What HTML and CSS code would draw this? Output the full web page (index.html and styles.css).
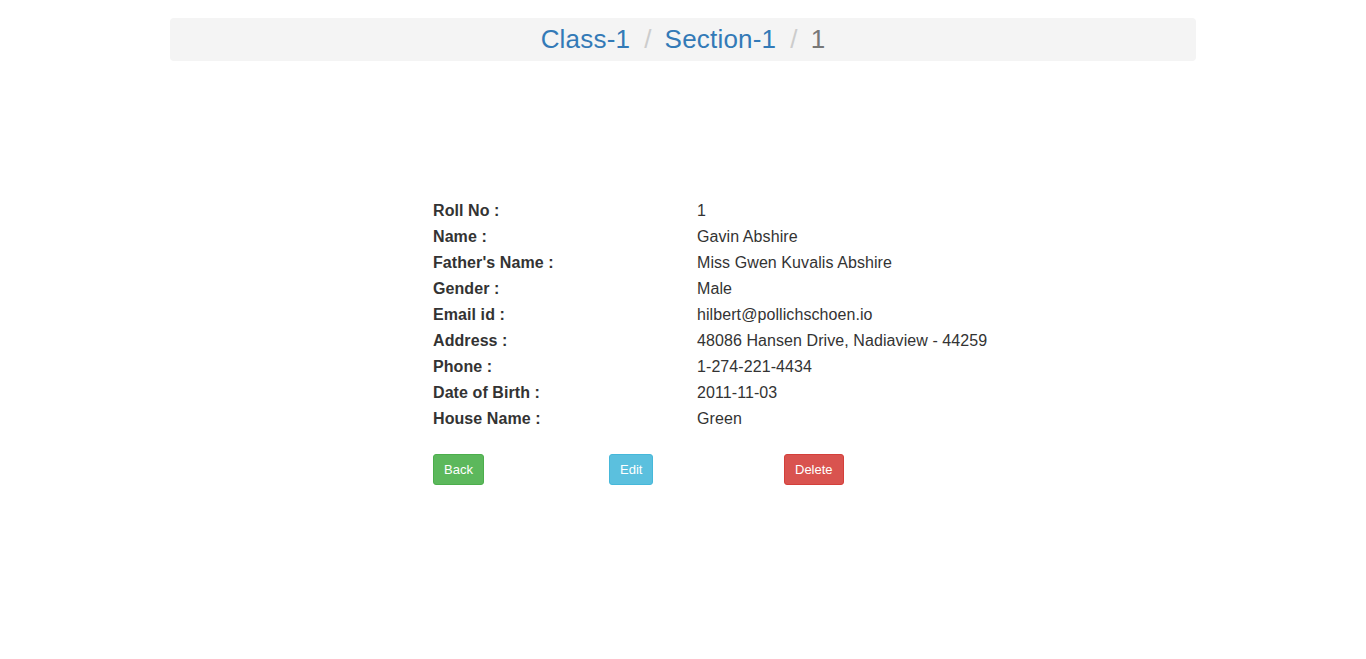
FILE: index.html
```html
<!DOCTYPE html>
<html>
<head>
<meta charset="utf-8">
<link rel="stylesheet" href="styles.css">
</head>
<body>
<nav class="crumbs">
  <a href="#">Class-1</a><span class="sep">/</span><a href="#">Section-1</a><span class="sep">/</span><span class="active">1</span>
</nav>
<section class="details">
  <dl class="info">
    <dt>Roll No :</dt><dd>1</dd>
    <dt>Name :</dt><dd>Gavin Abshire</dd>
    <dt>Father's Name :</dt><dd>Miss Gwen Kuvalis Abshire</dd>
    <dt>Gender :</dt><dd>Male</dd>
    <dt>Email id :</dt><dd>hilbert@pollichschoen.io</dd>
    <dt>Address :</dt><dd>48086 Hansen Drive, Nadiaview - 44259</dd>
    <dt>Phone :</dt><dd>1-274-221-4434</dd>
    <dt>Date of Birth :</dt><dd>2011-11-03</dd>
    <dt>House Name :</dt><dd>Green</dd>
  </dl>
  <div class="actions">
    <div><a class="btn btn-success" href="#">Back</a></div>
    <div><a class="btn btn-info" href="#">Edit</a></div>
    <div><a class="btn btn-danger" href="#">Delete</a></div>
  </div>
</section>
</body>
</html>
```
FILE: styles.css
```css
html, body {
  margin: 0;
  padding: 0;
  background: #fff;
}
body {
  font-family: "Liberation Sans", Arial, sans-serif;
  font-size: 16px;
  color: #333;
}
.crumbs {
  width: 1026px;
  margin: 18px auto 0;
  background: #f4f4f4;
  border-radius: 4px;
  padding: 8px 0 9px;
  text-align: center;
  font-size: 26px;
  line-height: 26px;
  letter-spacing: 0.2px;
}
.crumbs a {
  color: #337ab7;
  text-decoration: none;
}
.crumbs .sep {
  color: #ccc;
  padding: 0 13px 0 14px;
}
.crumbs .active {
  color: #777;
}
.details {
  width: 500px;
  margin: 137px auto 0;
}
.info {
  display: grid;
  grid-template-columns: 264px 1fr;
  margin: 0;
  line-height: 26px;
  letter-spacing: 0.08px;
}
.info dt {
  font-weight: bold;
  margin: 0;
}
.info dd {
  margin: 0;
  white-space: nowrap;
}
.actions {
  display: grid;
  grid-template-columns: 176px 175px 1fr;
  margin-top: 22px;
}
.btn {
  display: inline-block;
  font-size: 13px;
  line-height: 19px;
  padding: 5px 10px;
  border: 1px solid transparent;
  border-radius: 3px;
  color: #fff;
  text-decoration: none;
}
.btn-success {
  background: #5cb85c;
  border-color: #4cae4c;
}
.btn-info {
  background: #5bc0de;
  border-color: #46b8da;
}
.btn-danger {
  background: #d9534f;
  border-color: #d43f3a;
}
```
